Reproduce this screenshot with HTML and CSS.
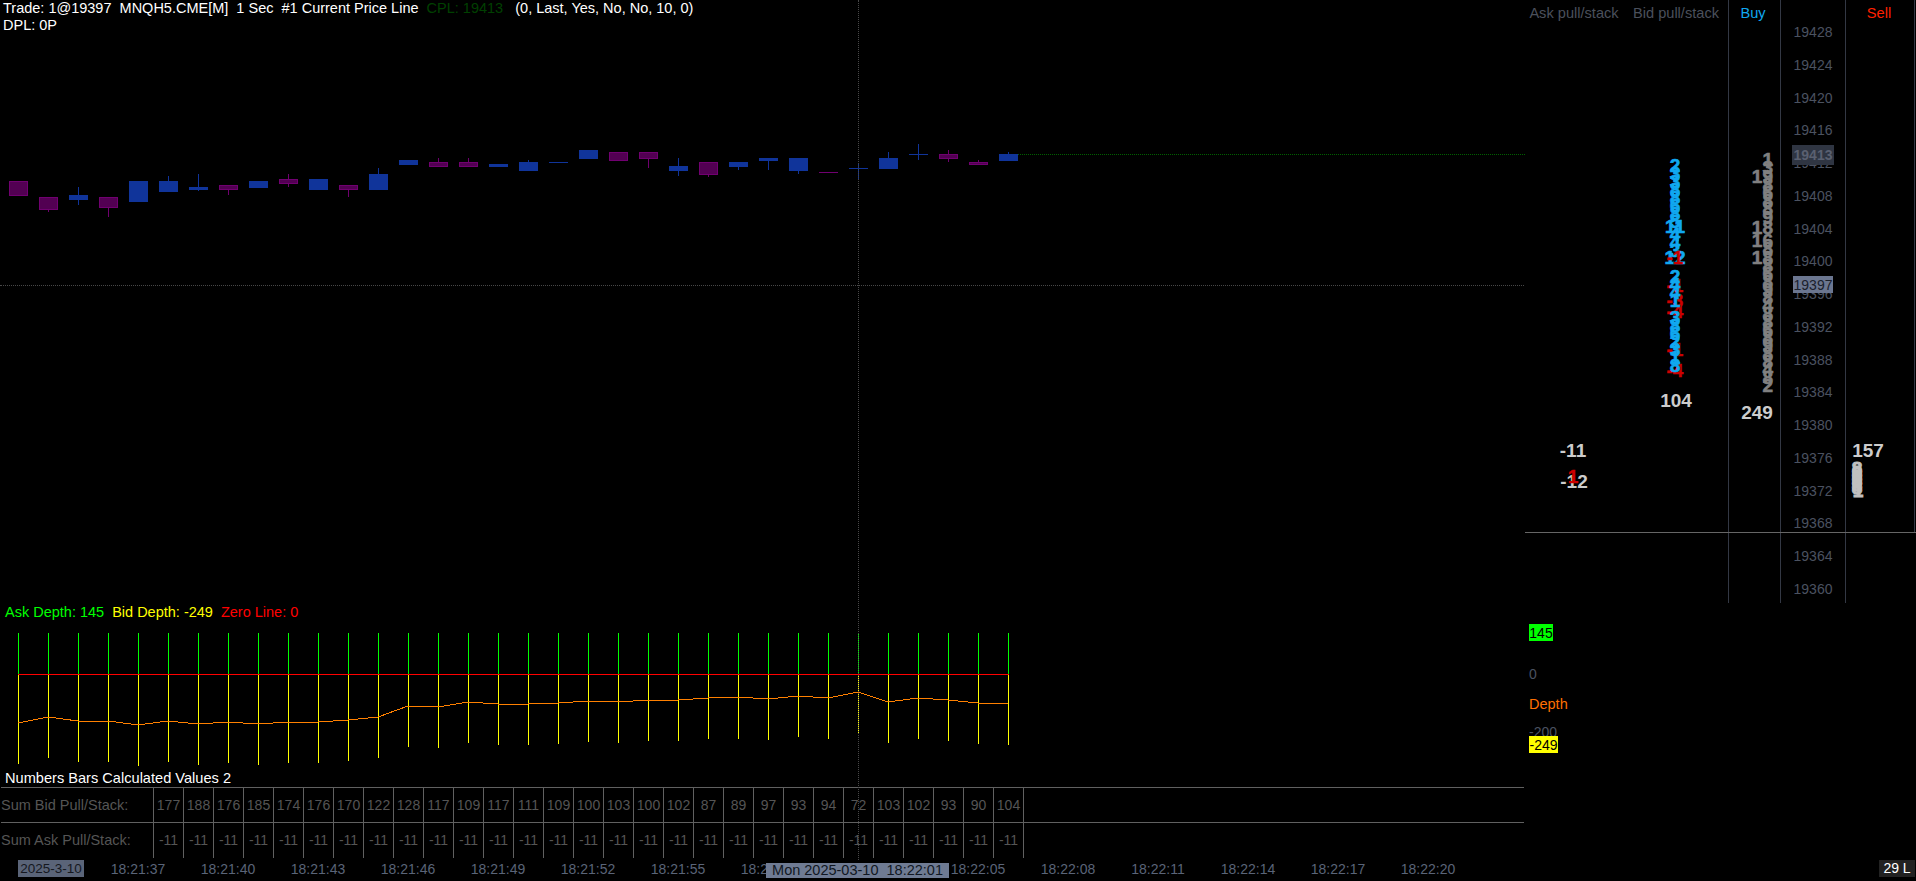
FILE: index.html
```html
<!DOCTYPE html>
<html lang="en">
<head>
    <meta charset="UTF-8">
    <title>MNQH5.CME[M] 1 Sec</title>
    <link rel="stylesheet" href="styles.css">
</head>
<body>
<main class="screen">
    <section class="price-row">
        <div class="price-left">
            <div class="study-title">
                <div class="title-line">Trade: 1@19397  MNQH5.CME[M]  1 Sec  #1 Current Price Line  <span class="cpl">CPL: 19413</span>   (0, Last, Yes, No, No, 10, 0)</div>
                <div class="title-line">DPL: 0P</div>
            </div>
            <svg class="candles" width="1525" height="569" viewBox="0 34 1525 569">
                <path class="cpl-line" d="M1008 154.5H1525"/>
                <g class="wick-up">
                    <path d="M78.5 187V205M168.5 176V181M198.5 174V191M378.5 168V174M528.5 160V162M678.5 158V176M738.5 162V170M768.5 158V170M798.5 158V174M858.5 163V180M888.5 152V158M918.5 144V160M1008.5 152V154"/>
                </g>
                <g class="wick-dn">
                    <path d="M48.5 210V212M108.5 208V217M228.5 190V195M288.5 174V187M348.5 190V197M438.5 158V162M468.5 158V162M648.5 159V168M708.5 175V177M948.5 150V162M978.5 160V162M819 172.5H838"/>
                </g>
                <g class="up">
                    <rect x="69" y="195" width="19" height="5"/>
                    <rect x="129" y="181" width="19" height="21"/>
                    <rect x="159" y="181" width="19" height="11"/>
                    <rect x="189" y="187" width="19" height="3"/>
                    <rect x="249" y="181" width="19" height="7"/>
                    <rect x="309" y="179" width="19" height="11"/>
                    <rect x="369" y="174" width="19" height="16"/>
                    <rect x="399" y="160" width="19" height="5"/>
                    <rect x="489" y="164" width="19" height="3"/>
                    <rect x="519" y="162" width="19" height="9"/>
                    <rect x="549" y="162" width="19" height="1"/>
                    <rect x="579" y="150" width="19" height="9"/>
                    <rect x="669" y="166" width="19" height="5"/>
                    <rect x="729" y="162" width="19" height="5"/>
                    <rect x="759" y="158" width="19" height="3"/>
                    <rect x="789" y="158" width="19" height="13"/>
                    <rect x="849" y="168" width="19" height="1"/>
                    <rect x="879" y="158" width="19" height="11"/>
                    <rect x="909" y="154" width="19" height="1"/>
                    <rect x="999" y="154" width="19" height="7"/>
                </g>
                <g class="dn">
                    <rect x="9.5" y="181.5" width="18" height="14"/>
                    <rect x="39.5" y="197.5" width="18" height="12"/>
                    <rect x="99.5" y="197.5" width="18" height="10"/>
                    <rect x="219.5" y="185.5" width="18" height="4"/>
                    <rect x="279.5" y="179.5" width="18" height="4"/>
                    <rect x="339.5" y="185.5" width="18" height="4"/>
                    <rect x="429.5" y="162.5" width="18" height="4"/>
                    <rect x="459.5" y="162.5" width="18" height="4"/>
                    <rect x="609.5" y="152.5" width="18" height="8"/>
                    <rect x="639.5" y="152.5" width="18" height="6"/>
                    <rect x="699.5" y="162.5" width="18" height="12"/>
                    <rect x="939.5" y="154.5" width="18" height="4"/>
                    <rect x="969.5" y="162.5" width="18" height="2"/>
                </g>
            </svg>
        </div>
        <svg class="dom" width="391" height="603" viewBox="1525 0 391 603">
            <path class="dom-grid" d="M1728.5 0V603M1780.5 0V603M1845.5 0V603M1914.5 0V532"/>
            <path class="dom-split" d="M1524 532.5H1916"/>

            <text class="dom-head" x="1574" y="18" text-anchor="middle">Ask pull/stack</text>
            <text class="dom-head" x="1676" y="18" text-anchor="middle">Bid pull/stack</text>
            <text class="head-buy" x="1753" y="18" text-anchor="middle">Buy</text>
            <text class="head-sell" x="1879" y="18" text-anchor="middle">Sell</text>

            <g class="tick" text-anchor="middle">
                <text x="1813" y="37">19428</text>
                <text x="1813" y="70">19424</text>
                <text x="1813" y="103">19420</text>
                <text x="1813" y="135">19416</text>
                <text x="1813" y="168">19412</text>
                <text x="1813" y="201">19408</text>
                <text x="1813" y="234">19404</text>
                <text x="1813" y="266">19400</text>
                <text x="1813" y="299">19396</text>
                <text x="1813" y="332">19392</text>
                <text x="1813" y="365">19388</text>
                <text x="1813" y="397">19384</text>
                <text x="1813" y="430">19380</text>
                <text x="1813" y="463">19376</text>
                <text x="1813" y="496">19372</text>
                <text x="1813" y="528">19368</text>
                <text x="1813" y="561">19364</text>
                <text x="1813" y="594">19360</text>
            </g>
            <rect class="cpl-box" x="1792" y="145" width="42" height="20"/>
            <text class="cpl-price" x="1813" y="160" text-anchor="middle">19413</text>
            <rect class="last-box" x="1793" y="276" width="40" height="17"/>
            <text class="last-price" x="1813" y="290" text-anchor="middle">19397</text>

            <g class="stack stack-red" text-anchor="middle">
                <text x="1675" y="292">-1</text>
                <text x="1675" y="307">-3</text>
                <text x="1675" y="318">-4</text>
                <text x="1675" y="356">-1</text>
                <text x="1675" y="377">-4</text>
            </g>
            <g class="stack stack-bid" text-anchor="middle">
                <text x="1675" y="172">2</text>
                <text x="1675" y="180">3</text>
                <text x="1675" y="188">3</text>
                <text x="1675" y="196">8</text>
                <text x="1675" y="204">8</text>
                <text x="1675" y="212">6</text>
                <text x="1675" y="220">8</text>
                <text x="1675" y="228">5</text>
                <text x="1675" y="233">11</text>
                <text x="1675" y="241">4</text>
                <text x="1675" y="249">4</text>
                <text x="1675" y="257">3</text>
                <text x="1675" y="264">12</text>
                <text x="1675" y="283">2</text>
                <text x="1675" y="291">4</text>
                <text x="1675" y="299">4</text>
                <text x="1675" y="307">1</text>
                <text x="1675" y="324">3</text>
                <text x="1675" y="332">8</text>
                <text x="1675" y="340">6</text>
                <text x="1675" y="348">2</text>
                <text x="1675" y="356">3</text>
                <text x="1675" y="364">1</text>
                <text x="1675" y="372">8</text>
            </g>
            <text class="stack stack-red" x="1675" y="264" text-anchor="middle">-1</text>
            <g class="stack stack-buy" text-anchor="end">
                <text x="1773" y="166">1</text>
                <text x="1773" y="174">3</text>
                <text x="1773" y="183">19</text>
                <text x="1773" y="191">8</text>
                <text x="1773" y="199">6</text>
                <text x="1773" y="207">8</text>
                <text x="1773" y="215">8</text>
                <text x="1773" y="224">9</text>
                <text x="1773" y="234">18</text>
                <text x="1773" y="247">16</text>
                <text x="1773" y="255">8</text>
                <text x="1773" y="264">18</text>
                <text x="1773" y="272">8</text>
                <text x="1773" y="280">6</text>
                <text x="1773" y="288">8</text>
                <text x="1773" y="296">9</text>
                <text x="1773" y="304">8</text>
                <text x="1773" y="312">4</text>
                <text x="1773" y="320">8</text>
                <text x="1773" y="328">8</text>
                <text x="1773" y="336">6</text>
                <text x="1773" y="344">8</text>
                <text x="1773" y="352">9</text>
                <text x="1773" y="360">8</text>
                <text x="1773" y="368">8</text>
                <text x="1773" y="376">4</text>
                <text x="1773" y="384">8</text>
                <text x="1773" y="392">2</text>
            </g>
            <g class="stack stack-sell" text-anchor="middle">
                <text x="1857" y="475">8</text>
                <text x="1857" y="479">8</text>
                <text x="1857" y="483">8</text>
                <text x="1857" y="487">8</text>
                <text x="1857" y="491">8</text>
                <text x="1857" y="494">8</text>
                <text x="1858" y="497">1</text>
            </g>

            <g class="stack total" text-anchor="middle">
                <text x="1676" y="407">104</text>
                <text x="1757" y="419">249</text>
                <text x="1868" y="457">157</text>
                <text x="1573" y="457">-11</text>
                <text x="1574" y="488">-12</text>
            </g>
            <text class="stack stack-red" x="1573" y="483" text-anchor="middle">1</text>
        </svg>
    </section>

    <section class="depth-row">
        <div class="depth-legend">
            <span class="ask">Ask Depth: 145</span>
            <span class="bid">Bid Depth: -249</span>
            <span class="zero">Zero Line: 0</span>
        </div>
        <svg class="depth" width="1916" height="149" viewBox="0 621 1916 149">
            <path class="ask-bars" d="M18.5 633V674M48.5 633V674M78.5 633V674M108.5 633V674M138.5 633V674M168.5 633V674M198.5 633V674M228.5 633V674M258.5 633V674M288.5 633V674M318.5 633V674M348.5 633V674M378.5 633V674M408.5 633V674M438.5 633V674M468.5 633V674M498.5 633V674M528.5 633V674M558.5 633V674M588.5 633V674M618.5 633V674M648.5 633V674M678.5 633V674M708.5 633V674M738.5 633V674M768.5 633V674M798.5 633V674M828.5 633V674M858.5 633V674M888.5 633V674M918.5 633V674M948.5 633V674M978.5 633V674M1008.5 633V674"/>
            <path class="bid-bars" d="M18.5 674V764M48.5 674V758M78.5 674V762M108.5 674V762M138.5 674V766M168.5 674V762M198.5 674V765M228.5 674V763M258.5 674V765M288.5 674V763M318.5 674V763M348.5 674V761M378.5 674V758M408.5 674V747M438.5 674V748M468.5 674V743M498.5 674V745M528.5 674V745M558.5 674V744M588.5 674V742M618.5 674V743M648.5 674V741M678.5 674V741M708.5 674V739M738.5 674V739M768.5 674V740M798.5 674V737M828.5 674V739M858.5 674V733M888.5 674V743M918.5 674V739M948.5 674V741M978.5 674V744M1008.5 674V745"/>
            <path class="zero-line" d="M18 674.5H1009"/>
            <polyline class="depth-line" points="18,723 48,717 78,721 108,721 138,725 168,721 198,724 228,722 258,724 288,722 318,722 348,720 378,717 408,706 438,707 468,702 498,704 528,704 558,703 588,701 618,702 648,700 678,700 708,698 738,697 768,699 798,696 828,698 858,692 888,702 918,698 948,700 978,703 1008,704"/>

            <rect class="ask-box" x="1529" y="624" width="24" height="17"/>
            <text class="box-text" x="1541" y="638" text-anchor="middle">145</text>
            <text class="tick" x="1529" y="679">0</text>
            <text class="depth-name" x="1529" y="709">Depth</text>
            <text class="tick" x="1529" y="737">-200</text>
            <rect class="bid-box" x="1529" y="736" width="29" height="17"/>
            <text class="box-text" x="1543.5" y="750" text-anchor="middle">-249</text>
        </svg>
    </section>

    <section class="numbers">
        <div class="numbers-title">Numbers Bars Calculated Values 2</div>
        <div class="numbers-row">
            <div class="row-label">Sum Bid Pull/Stack:</div>
            <div>177</div><div>188</div><div>176</div><div>185</div><div>174</div><div>176</div><div>170</div><div>122</div><div>128</div><div>117</div>
            <div>109</div><div>117</div><div>111</div><div>109</div><div>100</div><div>103</div><div>100</div><div>102</div><div>87</div><div>89</div>
            <div>97</div><div>93</div><div>94</div><div>72</div><div>103</div><div>102</div><div>93</div><div>90</div><div>104</div><div class="row-end"></div>
        </div>
        <div class="numbers-row">
            <div class="row-label">Sum Ask Pull/Stack:</div>
            <div>-11</div><div>-11</div><div>-11</div><div>-11</div><div>-11</div><div>-11</div><div>-11</div><div>-11</div><div>-11</div><div>-11</div>
            <div>-11</div><div>-11</div><div>-11</div><div>-11</div><div>-11</div><div>-11</div><div>-11</div><div>-11</div><div>-11</div><div>-11</div>
            <div>-11</div><div>-11</div><div>-11</div><div>-11</div><div>-11</div><div>-11</div><div>-11</div><div>-11</div><div>-11</div><div class="row-end"></div>
        </div>
    </section>

    <footer class="time-axis">
        <span class="date-box">2025-3-10</span>
        <span class="time first">18:21:37</span>
        <span class="time">18:21:40</span>
        <span class="time">18:21:43</span>
        <span class="time">18:21:46</span>
        <span class="time">18:21:49</span>
        <span class="time">18:21:52</span>
        <span class="time">18:21:55</span>
        <span class="time">18:21:58</span>
        <span class="time skip">18:22:05</span>
        <span class="time">18:22:08</span>
        <span class="time">18:22:11</span>
        <span class="time">18:22:14</span>
        <span class="time">18:22:17</span>
        <span class="time">18:22:20</span>
        <span class="bar-count">29 L</span>
        <span class="cross-time">Mon 2025-03-10  18:22:01</span>
    </footer>

    <div class="cross-v"></div>
    <div class="cross-h"></div>
</main>
</body>
</html>
```

FILE: styles.css
```css
* {
    margin: 0;
    padding: 0;
    box-sizing: border-box;
}

html, body {
    background: #000;
    overflow: hidden;
}

.screen {
    position: relative;
    width: 1916px;
    height: 881px;
    font-family: "Liberation Sans", Arial, sans-serif;
    font-size: 14px;
    color: #fff;
}

svg {
    display: block;
    shape-rendering: crispEdges;
    font-family: "Liberation Sans", Arial, sans-serif;
    font-size: 14px;
    fill: none;
}

/* price pane */
.price-row {
    display: flex;
    height: 603px;
}

.price-left {
    width: 1525px;
}

.study-title {
    height: 34px;
    padding-left: 3px;
    font-size: 14.5px;
    line-height: 17px;
}

.title-line {
    white-space: pre;
}

.cpl {
    color: #004000;
}

.cpl-line {
    stroke: #006000;
    stroke-dasharray: 1 1;
}

.up rect {
    fill: #10349a;
}

.dn rect {
    fill: #520052;
    stroke: #700070;
}

.wick-up path {
    stroke: #10349a;
}

.wick-dn path {
    stroke: #700070;
}

/* right hand columns */
.dom-grid {
    stroke: #333844;
}

.dom-split {
    stroke: #666;
}

.dom-head {
    fill: #4b505c;
    font-size: 14.6px;
}

.head-buy {
    fill: #10a8f0;
    font-size: 14.6px;
}

.head-sell {
    fill: #ff2000;
    font-size: 14.6px;
}

.tick {
    fill: #4b5260;
}

.cpl-box {
    fill: #2f3542;
}

.cpl-price {
    fill: #5a6070;
    font-weight: bold;
}

.last-box {
    fill: #6b7690;
}

.last-price {
    fill: #1a202c;
}

.stack {
    font-size: 19px;
    font-weight: bold;
}

.stack-bid {
    fill: #10a8f0;
    stroke: #10a8f0;
    stroke-width: 0.6px;
}

.stack-red {
    fill: #cc0000;
    stroke: #cc0000;
    stroke-width: 0.4px;
}

.stack-buy {
    fill: #808080;
    stroke: #808080;
    stroke-width: 0.6px;
}

.stack-sell {
    fill: #c0c0c0;
    stroke: #c0c0c0;
    stroke-width: 1px;
}

.total {
    fill: #ccc;
}

/* depth pane */
.depth-row {
    height: 167px;
}

.depth-legend {
    display: flex;
    height: 18px;
    padding-left: 5px;
    gap: 8px;
    font-size: 14.5px;
    line-height: 18px;
}

.ask {
    color: #0f0;
}

.bid {
    color: #ff0;
}

.zero {
    color: #f00;
}

.ask-bars {
    stroke: #0f0;
}

.bid-bars {
    stroke: #ff0;
}

.zero-line {
    stroke: #f00;
}

.depth-line {
    stroke: #ff8000;
}

.ask-box {
    fill: #0f0;
}

.bid-box {
    fill: #ff0;
}

.box-text {
    fill: #000;
}

.depth-name {
    fill: #ff7000;
    font-size: 14.5px;
}

/* numbers bars */
.numbers-title {
    height: 17px;
    padding-left: 5px;
    font-size: 14.6px;
    line-height: 17px;
}

.numbers-row {
    display: grid;
    grid-template-columns: 152px repeat(29, 30px) 1fr;
    width: 1523px;
    height: 35px;
    margin-left: 1px;
    border-top: 1px solid #606060;
    color: #555;
    line-height: 35px;
    text-align: center;
}

.numbers-row > div {
    border-left: 1px solid #606060;
}

.numbers-row > .row-label {
    border-left: 0;
    font-size: 14.5px;
    text-align: left;
    white-space: nowrap;
}

/* time axis */
.time-axis {
    position: relative;
    display: flex;
    align-items: center;
    height: 23px;
    color: #5a6478;
}

.date-box {
    width: 66px;
    height: 17px;
    margin-left: 18px;
    margin-right: 9px;
    background: #5a6478;
    color: #15181f;
    font-size: 13.5px;
    line-height: 17px;
    text-align: center;
    white-space: nowrap;
}

.time {
    width: 90px;
    text-align: center;
}

.time.skip {
    margin-left: 120px;
}

.bar-count {
    width: 36px;
    height: 17px;
    margin-left: auto;
    margin-right: 1px;
    background: #222;
    color: #fff;
    line-height: 17px;
    text-align: center;
}

.cross-time {
    position: absolute;
    left: 766px;
    top: 6px;
    width: 183px;
    height: 15px;
    background: #6f7b93;
    color: #111722;
    font-size: 14.5px;
    line-height: 15px;
    text-align: center;
    white-space: pre;
}

/* crosshair over the panes */
.cross-v {
    position: absolute;
    left: 858px;
    top: 0;
    height: 860px;
    border-left: 1px dotted #484848;
}

.cross-h {
    position: absolute;
    left: 0;
    top: 285px;
    width: 1524px;
    border-top: 1px dotted #484848;
}
```
